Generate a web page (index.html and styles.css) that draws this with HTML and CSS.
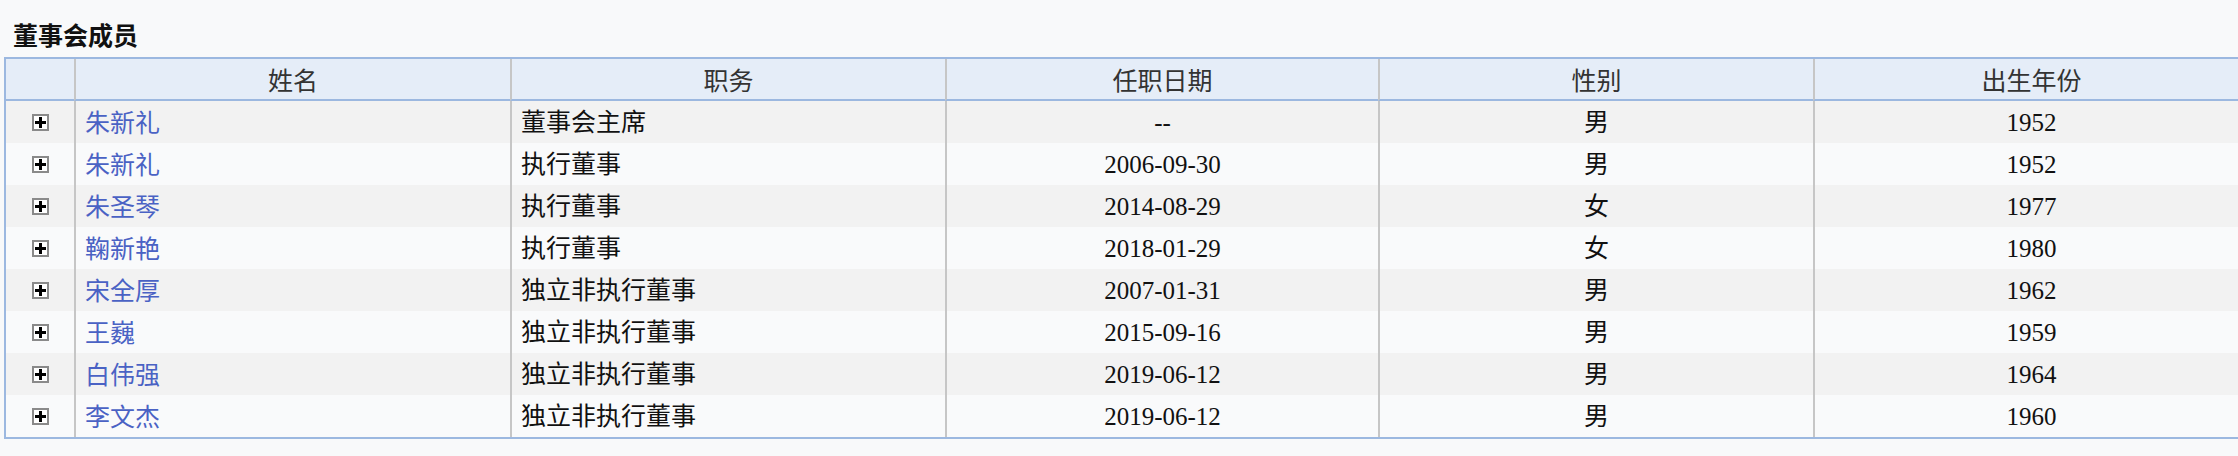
FILE: index.html
```html
<!DOCTYPE html>
<html lang="zh-CN">
<head>
<meta charset="utf-8">
<title>董事会成员</title>
<link rel="stylesheet" href="styles.css">
</head>
<body>
<div class="page">
  <h3 class="title">董事会成员</h3>
  <table class="grid">
    <thead>
      <tr>
        <th class="c-exp"></th>
        <th class="c-col c-first">姓名</th>
        <th class="c-col">职务</th>
        <th class="c-col c-date">任职日期</th>
        <th class="c-col">性别</th>
        <th class="c-col">出生年份</th>
      </tr>
    </thead>
    <tbody>
      <tr class="odd">
        <td class="exp"><svg class="plus" width="17" height="17" viewBox="0 0 17 17"><rect x="1" y="1" width="15" height="15" fill="#fff" stroke="#8a8a8a" stroke-width="2"/><path d="M3 8.5h11M8.5 3v11" stroke="#000" stroke-width="3"/></svg></td>
        <td class="left"><a class="name" href="#">朱新礼</a></td>
        <td class="left">董事会主席</td>
        <td class="center">--</td>
        <td class="center">男</td>
        <td class="center">1952</td>
      </tr>
      <tr class="even">
        <td class="exp"><svg class="plus" width="17" height="17" viewBox="0 0 17 17"><rect x="1" y="1" width="15" height="15" fill="#fff" stroke="#8a8a8a" stroke-width="2"/><path d="M3 8.5h11M8.5 3v11" stroke="#000" stroke-width="3"/></svg></td>
        <td class="left"><a class="name" href="#">朱新礼</a></td>
        <td class="left">执行董事</td>
        <td class="center">2006-09-30</td>
        <td class="center">男</td>
        <td class="center">1952</td>
      </tr>
      <tr class="odd">
        <td class="exp"><svg class="plus" width="17" height="17" viewBox="0 0 17 17"><rect x="1" y="1" width="15" height="15" fill="#fff" stroke="#8a8a8a" stroke-width="2"/><path d="M3 8.5h11M8.5 3v11" stroke="#000" stroke-width="3"/></svg></td>
        <td class="left"><a class="name" href="#">朱圣琴</a></td>
        <td class="left">执行董事</td>
        <td class="center">2014-08-29</td>
        <td class="center">女</td>
        <td class="center">1977</td>
      </tr>
      <tr class="even">
        <td class="exp"><svg class="plus" width="17" height="17" viewBox="0 0 17 17"><rect x="1" y="1" width="15" height="15" fill="#fff" stroke="#8a8a8a" stroke-width="2"/><path d="M3 8.5h11M8.5 3v11" stroke="#000" stroke-width="3"/></svg></td>
        <td class="left"><a class="name" href="#">鞠新艳</a></td>
        <td class="left">执行董事</td>
        <td class="center">2018-01-29</td>
        <td class="center">女</td>
        <td class="center">1980</td>
      </tr>
      <tr class="odd">
        <td class="exp"><svg class="plus" width="17" height="17" viewBox="0 0 17 17"><rect x="1" y="1" width="15" height="15" fill="#fff" stroke="#8a8a8a" stroke-width="2"/><path d="M3 8.5h11M8.5 3v11" stroke="#000" stroke-width="3"/></svg></td>
        <td class="left"><a class="name" href="#">宋全厚</a></td>
        <td class="left">独立非执行董事</td>
        <td class="center">2007-01-31</td>
        <td class="center">男</td>
        <td class="center">1962</td>
      </tr>
      <tr class="even">
        <td class="exp"><svg class="plus" width="17" height="17" viewBox="0 0 17 17"><rect x="1" y="1" width="15" height="15" fill="#fff" stroke="#8a8a8a" stroke-width="2"/><path d="M3 8.5h11M8.5 3v11" stroke="#000" stroke-width="3"/></svg></td>
        <td class="left"><a class="name" href="#">王巍</a></td>
        <td class="left">独立非执行董事</td>
        <td class="center">2015-09-16</td>
        <td class="center">男</td>
        <td class="center">1959</td>
      </tr>
      <tr class="odd">
        <td class="exp"><svg class="plus" width="17" height="17" viewBox="0 0 17 17"><rect x="1" y="1" width="15" height="15" fill="#fff" stroke="#8a8a8a" stroke-width="2"/><path d="M3 8.5h11M8.5 3v11" stroke="#000" stroke-width="3"/></svg></td>
        <td class="left"><a class="name" href="#">白伟强</a></td>
        <td class="left">独立非执行董事</td>
        <td class="center">2019-06-12</td>
        <td class="center">男</td>
        <td class="center">1964</td>
      </tr>
      <tr class="even">
        <td class="exp"><svg class="plus" width="17" height="17" viewBox="0 0 17 17"><rect x="1" y="1" width="15" height="15" fill="#fff" stroke="#8a8a8a" stroke-width="2"/><path d="M3 8.5h11M8.5 3v11" stroke="#000" stroke-width="3"/></svg></td>
        <td class="left"><a class="name" href="#">李文杰</a></td>
        <td class="left">独立非执行董事</td>
        <td class="center">2019-06-12</td>
        <td class="center">男</td>
        <td class="center">1960</td>
      </tr>
    </tbody>
  </table>
</div>
</body>
</html>
```

FILE: styles.css
```css
html {
  overflow: hidden;
}

body {
  margin: 0;
  background: #f8f9fa;
  font-family: "Liberation Serif", "Noto Sans CJK SC", serif;
  color: #111;
}

.page {
  padding: 19px 4px 0;
}

.title {
  margin: 0 0 8px;
  padding-left: 9px;
  height: 30px;
  font-family: "Noto Sans CJK SC", sans-serif;
  font-size: 25px;
  line-height: 30px;
  font-weight: bold;
  color: #111;
}

.grid {
  border-collapse: separate;
  border-spacing: 0;
  table-layout: fixed;
  width: 2245px;
  border: 2px solid #9cb8e0;
}

.grid th {
  box-sizing: border-box;
  height: 42px;
  padding: 0;
  background: #e5edf8;
  border-bottom: 2px solid #9cb8e0;
  font-family: "Noto Sans CJK SC", sans-serif;
  font-weight: normal;
  font-size: 25px;
  line-height: 1;
  color: #333;
  text-align: center;
  vertical-align: middle;
}

.grid th.c-exp {
  width: 68px;
}

.grid th.c-col {
  width: 435px;
  border-left: 2px solid #c6c6c6;
}

.grid th.c-first {
  width: 436px;
}

.grid th.c-date {
  width: 433px;
}

.grid td {
  box-sizing: border-box;
  height: 42px;
  padding: 0;
  font-size: 25px;
  line-height: 1;
  color: #111;
  vertical-align: middle;
  white-space: nowrap;
}

.grid td + td {
  border-left: 2px solid #c6c6c6;
}

.grid tr.odd td {
  background: #f2f2f2;
}

.grid tr.even td {
  background: #f9fafb;
}

.grid td.exp {
  text-align: center;
}

.plus {
  display: block;
  margin: 0 auto;
}

.grid td.left {
  text-align: left;
  padding-left: 9px;
}

.grid td.center {
  text-align: center;
}

.name {
  font-family: "Noto Sans CJK SC", sans-serif;
  color: #4a62c4;
  text-decoration: none;
}
```
